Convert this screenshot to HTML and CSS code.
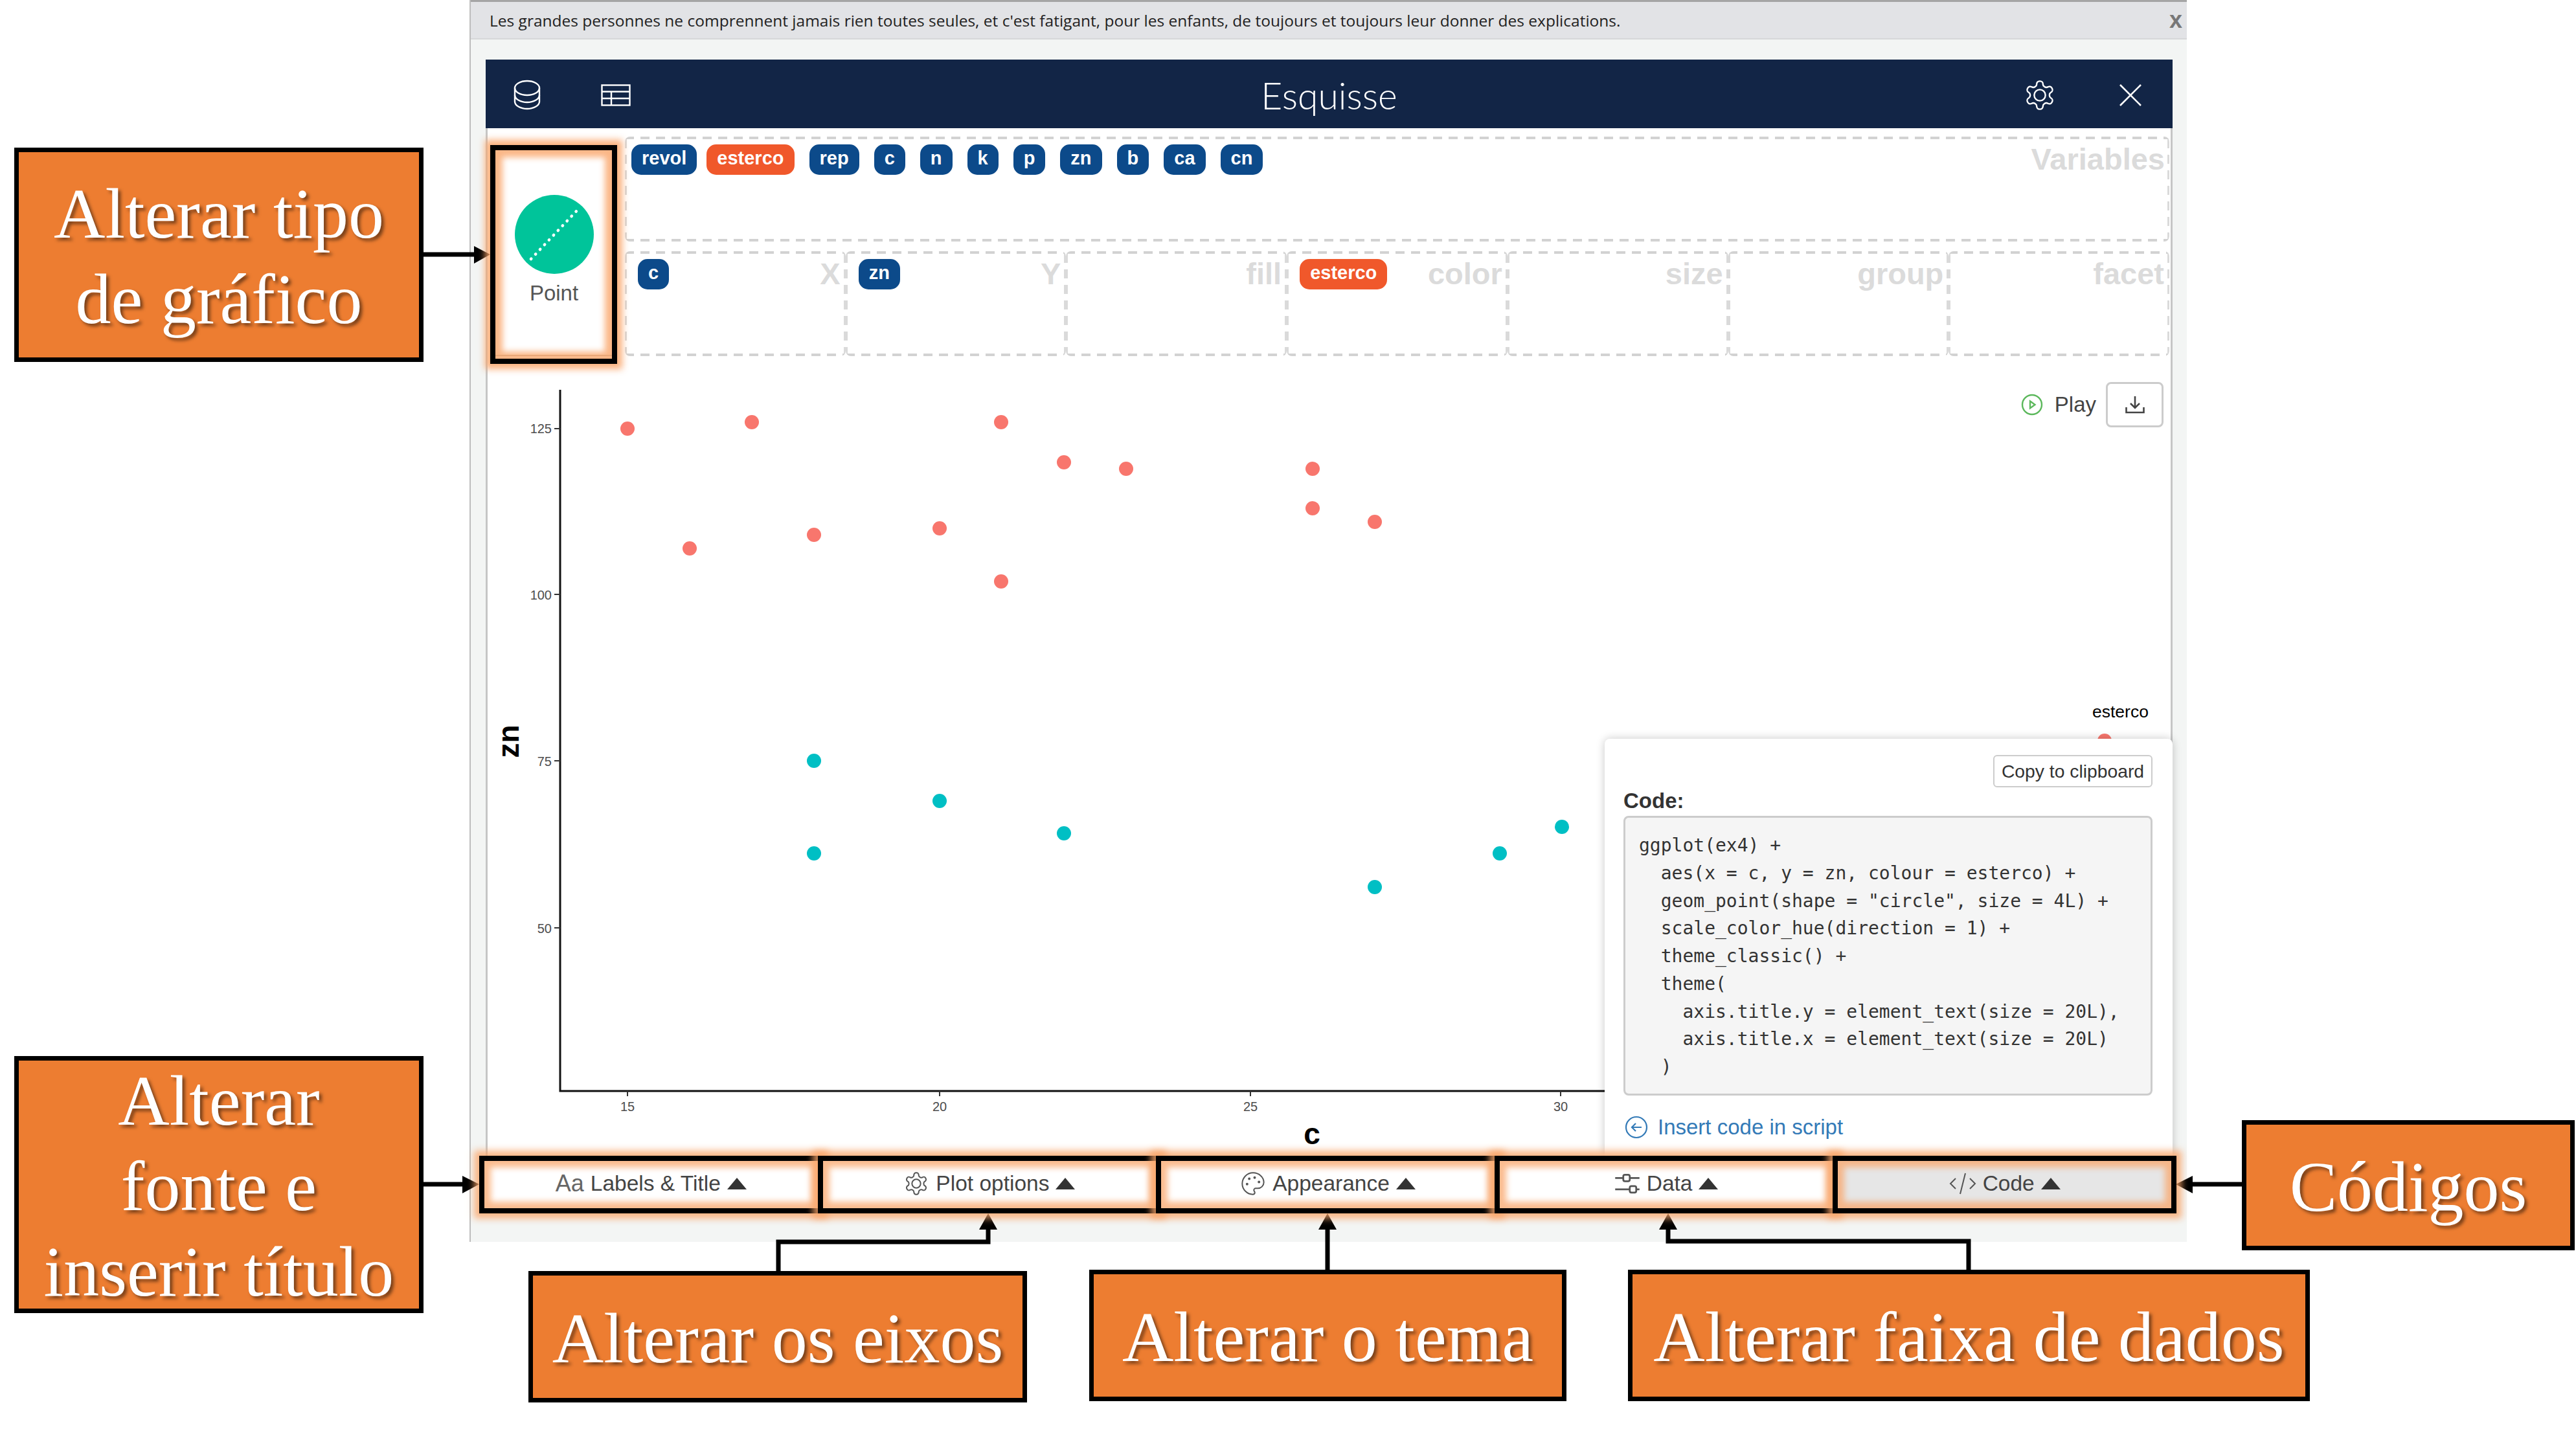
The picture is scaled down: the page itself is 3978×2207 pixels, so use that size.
FILE: index.html
```html
<!DOCTYPE html>
<html lang="pt">
<head>
    <meta charset="UTF-8">
    <title>Esquisse</title>
    <link rel="stylesheet" href="styles.css">
</head>
<body>
<div class="page">
    <div class="window">
        <div class="notice">
            <span>Les grandes personnes ne comprennent jamais rien toutes seules, et c'est fatigant, pour les enfants, de toujours et toujours leur donner des explications.</span>
            <span class="notice-close">x</span>
        </div>
        <div class="esquisse">
            <div class="navbar">
                <div class="nav-icons nav-left">
                    <svg class="ico-db" viewBox="0 0 42 47" fill="none" stroke="#fff" stroke-width="2.4">
                        <ellipse cx="21" cy="13" rx="19" ry="11"/>
                        <path d="M2 13v11c0 6 9 11 19 11s19-5 19-11V13"/>
                        <path d="M2 24v10c0 6 9 11 19 11s19-5 19-11V24"/>
                    </svg>
                    <svg class="ico-table" viewBox="0 0 46 34" fill="none" stroke="#fff" stroke-width="2.4">
                        <rect x="1.5" y="1.5" width="43" height="31"/>
                        <path d="M1.5 11.5h43M1.5 22h43M16 11.5v21"/>
                    </svg>
                </div>
                <div class="nav-title">Esquisse</div>
                <div class="nav-icons nav-right">
                    <svg class="ico-gear" viewBox="0 0 24 24" fill="none" stroke="#fff" stroke-width="1.1">
                        <path d="M12.22 2h-.44a2 2 0 0 0-2 2v.18a2 2 0 0 1-1 1.73l-.43.25a2 2 0 0 1-2 0l-.15-.08a2 2 0 0 0-2.73.73l-.22.38a2 2 0 0 0 .73 2.73l.15.1a2 2 0 0 1 1 1.72v.51a2 2 0 0 1-1 1.74l-.15.09a2 2 0 0 0-.73 2.73l.22.38a2 2 0 0 0 2.73.73l.15-.08a2 2 0 0 1 2 0l.43.25a2 2 0 0 1 1 1.73V20a2 2 0 0 0 2 2h.44a2 2 0 0 0 2-2v-.18a2 2 0 0 1 1-1.73l.43-.25a2 2 0 0 1 2 0l.15.08a2 2 0 0 0 2.73-.73l.22-.39a2 2 0 0 0-.73-2.73l-.15-.08a2 2 0 0 1-1-1.74v-.5a2 2 0 0 1 1-1.74l.15-.09a2 2 0 0 0 .73-2.73l-.22-.38a2 2 0 0 0-2.73-.73l-.15.08a2 2 0 0 1-2 0l-.43-.25a2 2 0 0 1-1-1.73V4a2 2 0 0 0-2-2z"/>
                        <circle cx="12" cy="12" r="4"/>
                    </svg>
                    <svg class="ico-close" viewBox="0 0 36 36" fill="none" stroke="#fff" stroke-width="2.6">
                        <path d="M2 2l32 32M34 2L2 34"/>
                    </svg>
                </div>
            </div>

            <div class="main">
                <div class="editor">
                    <div class="chart-type">
                        <div class="chart-type-inner">
                            <svg class="ico-point" viewBox="0 0 122 122">
                                <circle cx="61" cy="61" r="61" fill="#00c49a"/>
                                <path d="M25 99L98 22" stroke="#fff" stroke-width="4.5" stroke-linecap="round" stroke-dasharray="0.5 9.6" fill="none"/>
                            </svg>
                            <div class="chart-type-label">Point</div>
                        </div>
                    </div>
                    <div class="zones">
                        <div class="zone zone-vars">
                            <div class="chips">
                                <span class="chip">revol</span>
                                <span class="chip chip-orange">esterco</span>
                                <span class="chip">rep</span>
                                <span class="chip">c</span>
                                <span class="chip">n</span>
                                <span class="chip">k</span>
                                <span class="chip">p</span>
                                <span class="chip">zn</span>
                                <span class="chip">b</span>
                                <span class="chip">ca</span>
                                <span class="chip">cn</span>
                            </div>
                            <span class="zone-label">Variables</span>
                        </div>
                        <div class="zone-row">
                            <div class="zone"><div class="chips"><span class="chip">c</span></div><span class="zone-label">X</span></div>
                            <div class="zone"><div class="chips"><span class="chip">zn</span></div><span class="zone-label">Y</span></div>
                            <div class="zone"><span></span><span class="zone-label">fill</span></div>
                            <div class="zone"><div class="chips"><span class="chip chip-solo">esterco</span></div><span class="zone-label">color</span></div>
                            <div class="zone"><span></span><span class="zone-label">size</span></div>
                            <div class="zone"><span></span><span class="zone-label">group</span></div>
                            <div class="zone"><span></span><span class="zone-label">facet</span></div>
                        </div>
                    </div>
                </div>

                <div class="plot">
                    <svg class="plot-svg" viewBox="753 552 2599 1233">
                        <path class="axis" d="M865 602V1685H2480"/>
                        <path class="tick" d="M856 662h9M856 918h9M856 1175h9M856 1433h9M969 1685v8M1451 1685v8M1931 1685v8M2410 1685v8"/>
                        <g class="tick-labels">
                            <text x="852" y="669" text-anchor="end">125</text>
                            <text x="852" y="926" text-anchor="end">100</text>
                            <text x="852" y="1183" text-anchor="end">75</text>
                            <text x="852" y="1441" text-anchor="end">50</text>
                            <text x="969" y="1716" text-anchor="middle">15</text>
                            <text x="1451" y="1716" text-anchor="middle">20</text>
                            <text x="1931" y="1716" text-anchor="middle">25</text>
                            <text x="2410" y="1716" text-anchor="middle">30</text>
                        </g>
                        <text class="axis-title" x="2026" y="1767" text-anchor="middle">c</text>
                        <text class="axis-title" transform="translate(801 1145) rotate(-90)" text-anchor="middle">zn</text>
                        <text class="legend-title" x="3231" y="1108">esterco</text>
                        <g fill="#f8766d">
                            <circle cx="969" cy="662" r="11"/>
                            <circle cx="1065" cy="847" r="11"/>
                            <circle cx="1161" cy="652" r="11"/>
                            <circle cx="1257" cy="826" r="11"/>
                            <circle cx="1451" cy="816" r="11"/>
                            <circle cx="1546" cy="652" r="11"/>
                            <circle cx="1546" cy="898" r="11"/>
                            <circle cx="1643" cy="714" r="11"/>
                            <circle cx="1739" cy="724" r="11"/>
                            <circle cx="2027" cy="724" r="11"/>
                            <circle cx="2027" cy="785" r="11"/>
                            <circle cx="2123" cy="806" r="11"/>
                            <circle cx="3250" cy="1144" r="11"/>
                        </g>
                        <g fill="#00bfc4">
                            <circle cx="1257" cy="1175" r="11"/>
                            <circle cx="1257" cy="1318" r="11"/>
                            <circle cx="1451" cy="1237" r="11"/>
                            <circle cx="1643" cy="1287" r="11"/>
                            <circle cx="2123" cy="1370" r="11"/>
                            <circle cx="2316" cy="1318" r="11"/>
                            <circle cx="2412" cy="1277" r="11"/>
                        </g>
                    </svg>

                    <div class="plot-tools">
                        <svg class="ico-play" viewBox="0 0 34 34" fill="none" stroke="#5cb85c" stroke-width="2.4">
                            <circle cx="17" cy="17" r="15"/>
                            <path d="M14 11.5l7.5 5.5-7.5 5.5z"/>
                        </svg>
                        <span class="play-label">Play</span>
                        <button class="btn-download">
                            <svg viewBox="0 0 30 28" fill="none" stroke="#444" stroke-width="2.6">
                                <path d="M15 1v17M8 12l7 7 7-7M1.5 18v8h27v-8"/>
                            </svg>
                        </button>
                    </div>

                    <div class="code-panel">
                        <button class="btn-copy">Copy to clipboard</button>
                        <div class="code-label">Code:</div>
<pre class="code-box">ggplot(ex4) +
  aes(x = c, y = zn, colour = esterco) +
  geom_point(shape = "circle", size = 4L) +
  scale_color_hue(direction = 1) +
  theme_classic() +
  theme(
    axis.title.y = element_text(size = 20L),
    axis.title.x = element_text(size = 20L)
  )</pre>
                        <div class="insert-link">
                            <svg viewBox="0 0 36 36" fill="none" stroke="#337ab7" stroke-width="2.2">
                                <circle cx="18" cy="18" r="16"/>
                                <path d="M26 18H11M17 12l-6 6 6 6"/>
                            </svg>
                            <span>Insert code in script</span>
                        </div>
                    </div>
                </div>
            </div>

            <div class="bar">
                <div class="bar-cell"><span class="aa">Aa</span><span>Labels &amp; Title</span><i class="caret"></i></div>
                <div class="bar-cell">
                    <svg class="bar-ico" viewBox="0 0 24 24" fill="none" stroke="#555" stroke-width="1.2">
                        <path d="M12.22 2h-.44a2 2 0 0 0-2 2v.18a2 2 0 0 1-1 1.73l-.43.25a2 2 0 0 1-2 0l-.15-.08a2 2 0 0 0-2.73.73l-.22.38a2 2 0 0 0 .73 2.73l.15.1a2 2 0 0 1 1 1.72v.51a2 2 0 0 1-1 1.74l-.15.09a2 2 0 0 0-.73 2.73l.22.38a2 2 0 0 0 2.73.73l.15-.08a2 2 0 0 1 2 0l.43.25a2 2 0 0 1 1 1.73V20a2 2 0 0 0 2 2h.44a2 2 0 0 0 2-2v-.18a2 2 0 0 1 1-1.73l.43-.25a2 2 0 0 1 2 0l.15.08a2 2 0 0 0 2.73-.73l.22-.39a2 2 0 0 0-.73-2.73l-.15-.08a2 2 0 0 1-1-1.74v-.5a2 2 0 0 1 1-1.74l.15-.09a2 2 0 0 0 .73-2.73l-.22-.38a2 2 0 0 0-2.73-.73l-.15.08a2 2 0 0 1-2 0l-.43-.25a2 2 0 0 1-1-1.73V4a2 2 0 0 0-2-2z"/>
                        <circle cx="12" cy="12" r="4"/>
                    </svg>
                    <span>Plot options</span><i class="caret"></i>
                </div>
                <div class="bar-cell">
                    <svg class="bar-ico" viewBox="0 0 24 24" fill="none" stroke="#555" stroke-width="1.2">
                        <path d="M12 2C6.5 2 2 6.5 2 12s4.5 10 10 10c.926 0 1.648-.746 1.648-1.688 0-.437-.18-.835-.437-1.125-.29-.289-.438-.652-.438-1.125a1.64 1.64 0 0 1 1.668-1.668h1.996c3.051 0 5.555-2.503 5.555-5.554C21.965 6.012 17.461 2 12 2z"/>
                        <circle cx="13.5" cy="6.5" r=".6"/><circle cx="17.5" cy="10.5" r=".6"/><circle cx="8.5" cy="7.5" r=".6"/><circle cx="6.5" cy="12.5" r=".6"/>
                    </svg>
                    <span>Appearance</span><i class="caret"></i>
                </div>
                <div class="bar-cell">
                    <svg class="bar-ico" viewBox="0 0 32 28" fill="none" stroke="#555" stroke-width="2.2">
                        <path d="M1 7h10M19 7h12M1 21h18M27 21h4"/>
                        <rect x="11" y="3" width="8" height="8" rx="2"/>
                        <rect x="19" y="17" width="8" height="8" rx="2"/>
                    </svg>
                    <span>Data</span><i class="caret"></i>
                </div>
                <div class="bar-cell bar-cell-active">
                    <svg class="bar-ico ico-code" viewBox="0 0 42 36" fill="none" stroke="#555" stroke-width="2">
                        <path d="M10 10l-8 8 8 8M32 10l8 8-8 8M25 2l-8 32"/>
                    </svg>
                    <span>Code</span><i class="caret"></i>
                </div>
            </div>
        </div>
    </div>

    <div class="callout callout-tipo">Alterar tipo<br>de gráfico</div>
    <div class="callout callout-fonte">Alterar<br>fonte e<br>inserir título</div>
    <div class="callout callout-eixos">Alterar os eixos</div>
    <div class="callout callout-tema">Alterar o tema</div>
    <div class="callout callout-dados">Alterar faixa de dados</div>
    <div class="callout callout-codigos">Códigos</div>

    <svg class="arrows" viewBox="0 0 3978 2207">
        <g fill="none" stroke="#000" stroke-width="7">
            <path d="M654 393H736"/>
            <path d="M654 1829H718"/>
            <path d="M1202 1963V1918H1526V1895"/>
            <path d="M2050 1961V1895"/>
            <path d="M3040 1961V1917H2576V1895"/>
            <path d="M3462 1829H3382"/>
        </g>
        <g fill="#000">
            <path d="M732 380L757 393L732 407Z"/>
            <path d="M714 1816L740 1829L714 1843Z"/>
            <path d="M1512 1899L1526 1874L1540 1899Z"/>
            <path d="M2036 1899L2050 1874L2064 1899Z"/>
            <path d="M2562 1899L2576 1874L2590 1899Z"/>
            <path d="M3386 1816L3360 1829L3386 1843Z"/>
        </g>
    </svg>
</div>
</body>
</html>
```

FILE: styles.css
```css
* {
    box-sizing: border-box;
}

body {
    margin: 0;
    background-color: #ffffff;
    font-family: "Liberation Sans", Arial, sans-serif;
    color: #333333;
}

.page {
    position: relative;
    width: 3978px;
    height: 2207px;
    overflow: hidden;
    background-color: #ffffff;
}

/* app window */
.window {
    margin-left: 725px;
    width: 2652px;
    height: 1918px;
    background-color: #f3f5f4;
    border-left: 2px solid #bdbdbd;
}

.notice {
    display: flex;
    justify-content: space-between;
    align-items: center;
    height: 61px;
    padding: 0 7px 0 29px;
    background-color: #e2e3e6;
    border-top: 3px solid #a5a5a5;
    border-bottom: 2px solid #d6d7d9;
    font-family: "Open Sans", sans-serif;
    font-size: 24.5px;
    color: #222222;
}

.notice-close {
    font-family: "Liberation Sans", sans-serif;
    font-size: 36px;
    font-weight: bold;
    color: #777777;
}

.esquisse {
    margin: 31px 22px 0 23px;
}

.navbar {
    display: grid;
    grid-template-columns: 1fr auto 1fr;
    align-items: center;
    height: 106px;
    padding-top: 3px;
    background-color: #122546;
}

.nav-icons {
    display: flex;
    align-items: center;
}

.nav-left {
    padding-left: 43px;
    gap: 93px;
}

.nav-right {
    justify-content: flex-end;
    padding-right: 47px;
    gap: 96px;
}

.ico-db { width: 42px; height: 47px; }
.ico-table { width: 46px; height: 34px; }
.ico-gear { width: 52px; height: 52px; }
.ico-close { width: 36px; height: 36px; }

.nav-title {
    font-family: "Lato", sans-serif;
    font-size: 57px;
    font-weight: 300;
    color: #ffffff;
}

.main {
    background-color: #ffffff;
    border-left: 3px solid #c6c6c6;
    border-right: 3px solid #c6c6c6;
}

/* chart type and drop zones */
.editor {
    display: flex;
    align-items: flex-start;
    height: 354px;
}

.chart-type {
    position: relative;
    z-index: 1;
    flex: none;
    width: 196px;
    height: 338px;
    margin: 26px 12px 0 4px;
    padding-bottom: 4px;
    background-color: #ffffff;
    border: 8px solid #000000;
    box-shadow: 0 0 10px 8px rgba(250, 165, 105, 0.85), inset 0 0 10px 11px rgba(250, 165, 105, 0.8);
}

.chart-type-inner {
    display: flex;
    flex-direction: column;
    align-items: center;
    height: 100%;
    padding-top: 69px;
    padding-left: 1px;
    border-bottom: 2px solid #e9a878;
}

.ico-point {
    width: 122px;
    height: 122px;
}

.chart-type-label {
    margin-top: 11px;
    font-size: 33px;
    color: #555555;
}

.zones {
    flex: 1;
    margin-top: 13px;
    margin-right: 2px;
}

/* dashes drawn by hand: the browser's own dashed border is too short */
.zone {
    display: flex;
    justify-content: space-between;
    align-items: flex-start;
    flex: 1;
    height: 162px;
    padding: 7px 7px 0 10px;
    background-image:
        repeating-linear-gradient(90deg, #d2d2d2 0 14px, transparent 14px 24px),
        repeating-linear-gradient(90deg, #d2d2d2 0 14px, transparent 14px 24px),
        repeating-linear-gradient(0deg, #dadada 0 14px, transparent 14px 24px),
        repeating-linear-gradient(0deg, #dadada 0 14px, transparent 14px 24px);
    background-size: 100% 4px, 100% 4px, 3px 100%, 3px 100%;
    background-position: top, bottom, left, right;
    background-repeat: no-repeat;
    border-radius: 8px;
}

.zone-row {
    display: flex;
    margin-top: 15px;
}

.zone-row .zone {
    padding-left: 20px;
    padding-right: 8px;
}

.zone-label {
    font-size: 47px;
    font-weight: bold;
    line-height: 56px;
    color: #dbdbdb;
}

.chips {
    display: flex;
    gap: 23px;
    padding-top: 5px;
}

.chip {
    height: 47px;
    padding: 0 16px;
    border-radius: 15px;
    background-color: #0c4a8a;
    font-size: 29px;
    font-weight: bold;
    line-height: 43px;
    color: #ffffff;
}

.chip-orange,
.chip-solo {
    background-color: #f0582b;
}

.chip-orange {
    margin-left: -8px;
}

/* plot area */
.plot {
    position: relative;
    height: 1233px;
}

.plot-svg {
    display: block;
    width: 2599px;
    height: 1233px;
}

.axis {
    fill: none;
    stroke: #111111;
    stroke-width: 3px;
}

.tick {
    fill: none;
    stroke: #333333;
    stroke-width: 2px;
}

.tick-labels text {
    font-size: 20px;
    fill: #4d4d4d;
}

.axis-title {
    font-size: 46px;
    font-weight: bold;
    fill: #000000;
}

.legend-title {
    font-size: 26.5px;
    fill: #000000;
}

.plot-tools {
    position: absolute;
    top: 38px;
    right: 11px;
    display: flex;
    align-items: center;
}

.ico-play {
    width: 34px;
    height: 34px;
    margin-right: 18px;
}

.play-label {
    margin-right: 15px;
    font-size: 33px;
    color: #444444;
}

.btn-download {
    display: flex;
    justify-content: center;
    align-items: center;
    width: 89px;
    height: 70px;
    padding: 0;
    background-color: #ffffff;
    border: 3px solid #cccccc;
    border-radius: 8px;
}

.btn-download svg {
    width: 30px;
    height: 28px;
}

/* code popup */
.code-panel {
    position: absolute;
    top: 589px;
    right: -3px;
    bottom: 0;
    width: 877px;
    padding: 25px 31px 0 29px;
    background-color: #ffffff;
    border-radius: 8px 8px 0 0;
    box-shadow: 0 0 14px rgba(0, 0, 0, 0.22);
}

.btn-copy {
    display: block;
    width: 246px;
    height: 50px;
    margin-left: auto;
    padding: 0;
    background-color: #ffffff;
    border: 2px solid #cccccc;
    border-radius: 6px;
    font-family: "Liberation Sans", sans-serif;
    font-size: 28.3px;
    color: #333333;
}

.code-label {
    margin-top: 4px;
    font-size: 33px;
    font-weight: bold;
    line-height: 33px;
}

.code-box {
    height: 432px;
    margin: 7px 0 0;
    padding: 22px 10px 0 21px;
    background-color: #f5f5f5;
    border: 3px solid #cccccc;
    border-radius: 8px;
    font-family: "DejaVu Sans Mono", monospace;
    font-size: 28px;
    line-height: 42.75px;
    color: #333333;
}

.insert-link {
    display: flex;
    align-items: center;
    gap: 15px;
    margin-top: 30px;
    padding-left: 2px;
    font-size: 33px;
    color: #337ab7;
}

.insert-link svg {
    width: 36px;
    height: 36px;
}

/* bottom buttons */
.bar {
    position: relative;
    z-index: 1;
    display: grid;
    grid-template-columns: repeat(5, 1fr);
    height: 89px;
    margin: 0 -2px 0 -6px;
}

.bar-cell {
    display: flex;
    justify-content: center;
    align-items: center;
    gap: 10px;
    margin-left: -4px;
    margin-right: -4px;
    padding-bottom: 4px;
    background-color: #ffffff;
    border: 8px solid #000000;
    font-size: 33.5px;
    color: #444444;
    box-shadow: 0 0 10px 8px rgba(250, 165, 105, 0.8), inset 0 0 10px 10px rgba(250, 165, 105, 0.75);
}

.bar-cell-active {
    background-color: #e6e6e6;
}

.aa {
    font-size: 36px;
    color: #666666;
}

.bar-ico {
    width: 40px;
    height: 40px;
}

.ico-code {
    width: 42px;
    height: 36px;
}

.caret {
    width: 0;
    height: 0;
    border-left: 15px solid transparent;
    border-right: 15px solid transparent;
    border-bottom: 18px solid #333333;
}

/* annotations on top of the screenshot */
.callout {
    position: absolute;
    display: flex;
    justify-content: center;
    align-items: center;
    padding-top: 5px;
    text-align: center;
    background-color: #ed7d31;
    border: 7px solid #000000;
    font-family: "Liberation Serif", "Times New Roman", serif;
    font-size: 110px;
    line-height: 132px;
    color: #ffffff;
    text-shadow: 4px 4px 5px rgba(0, 0, 0, 0.5);
}

.callout-tipo { left: 22px; top: 228px; width: 632px; height: 331px; }
.callout-fonte { left: 22px; top: 1631px; width: 632px; height: 397px; }
.callout-eixos { left: 816px; top: 1963px; width: 770px; height: 203px; }
.callout-tema { left: 1682px; top: 1961px; width: 737px; height: 203px; }
.callout-dados { left: 2514px; top: 1961px; width: 1053px; height: 203px; }
.callout-codigos { left: 3462px; top: 1730px; width: 514px; height: 201px; }

.arrows {
    position: absolute;
    top: 0;
    left: 0;
    width: 3978px;
    height: 2207px;
    pointer-events: none;
}
```
